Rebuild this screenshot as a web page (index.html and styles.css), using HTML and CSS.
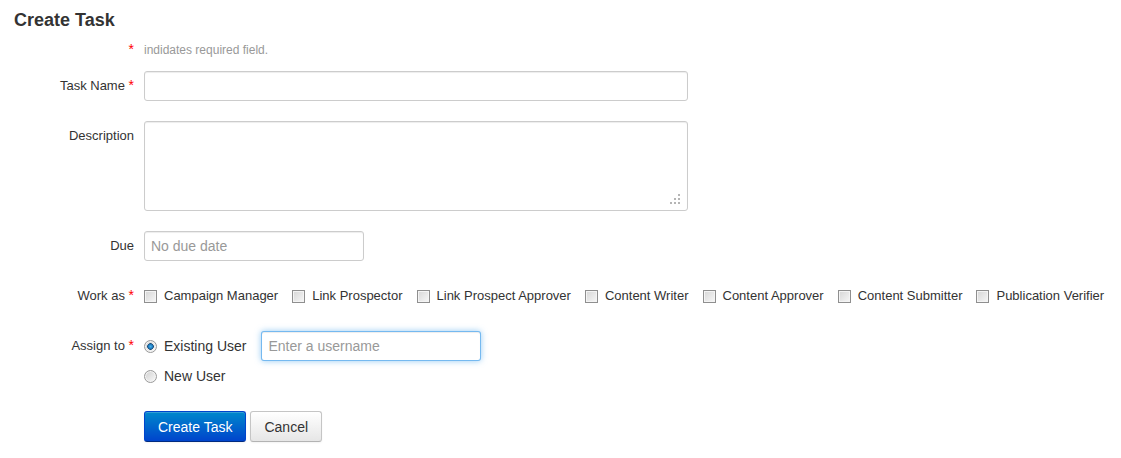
FILE: index.html
```html
<!DOCTYPE html>
<html>
    <head>
        <meta charset="utf-8">
        <title>Create Task</title>
        <link rel="stylesheet" href="styles.css">
    </head>
    <body>
        <div class="page">
            <h3>Create Task</h3>
            <div class="row note">
                <span class="label"><span class="req">*</span></span>
                <span class="hint">indidates required field.</span>
            </div>

            <div class="row">
                <label class="label" for="name">Task Name <span class="req">*</span></label>
                <input class="text wide" id="name" type="text">
            </div>

            <div class="row">
                <label class="label" for="desc">Description</label>
                <div class="area">
                    <textarea class="text wide" id="desc"></textarea>
                    <svg class="grip" width="11" height="11" viewBox="0 0 11 11">
                        <rect x="8" y="0" width="2" height="2" fill="#b5b5b5"/>
                        <rect x="4" y="4" width="2" height="2" fill="#b5b5b5"/>
                        <rect x="8" y="4" width="2" height="2" fill="#b5b5b5"/>
                        <rect x="0" y="8" width="2" height="2" fill="#b5b5b5"/>
                        <rect x="4" y="8" width="2" height="2" fill="#b5b5b5"/>
                        <rect x="8" y="8" width="2" height="2" fill="#b5b5b5"/>
                    </svg>
                </div>
            </div>

            <div class="row">
                <label class="label" for="due">Due</label>
                <input class="text short" id="due" type="text" placeholder="No due date">
            </div>

            <div class="row">
                <span class="label">Work as <span class="req">*</span></span>
                <div class="checks">
                    <label class="check"><input type="checkbox"> Campaign Manager</label>
                    <label class="check"><input type="checkbox"> Link Prospector</label>
                    <label class="check"><input type="checkbox"> Link Prospect Approver</label>
                    <label class="check"><input type="checkbox"> Content Writer</label>
                    <label class="check"><input type="checkbox"> Content Approver</label>
                    <label class="check"><input type="checkbox"> Content Submitter</label>
                    <label class="check"><input type="checkbox"> Publication Verifier</label>
                </div>
            </div>

            <div class="row">
                <span class="label">Assign to <span class="req">*</span></span>
                <div class="options">
                    <div class="option">
                        <label class="check radio"><input type="radio" name="assign" checked> Existing User</label>
                        <input class="text short focus" type="text" placeholder="Enter a username">
                    </div>
                    <div class="option">
                        <label class="check radio"><input type="radio" name="assign"> New User</label>
                    </div>
                </div>
            </div>

            <div class="row">
                <span class="label"></span>
                <div class="buttons">
                    <button class="btn primary">Create Task</button>
                    <button class="btn">Cancel</button>
                </div>
            </div>
        </div>
    </body>
</html>
```

FILE: styles.css
```css
*, ::after, ::before {
    box-sizing: border-box;
}
body {
    margin: 0;
    font-family: "Liberation Sans", Arial, sans-serif;
    font-size: 13px;
    color: #333;
    background: #fff;
}
.page {
    padding: 10px 14px;
}
h3 {
    margin: 0 0 10px 0;
    font-size: 18px;
    line-height: 20px;
    font-weight: bold;
}
.row {
    display: flex;
    align-items: flex-start;
    gap: 10px;
    margin-bottom: 20px;
}
.row.note {
    margin-bottom: 11px;
    height: 20px;
    line-height: 20px;
}
.label {
    flex: 0 0 120px;
    text-align: right;
    line-height: 30px;
    height: 30px;
}
.note .label {
    line-height: 20px;
    height: 20px;
}
.req {
    color: #f00;
    font-size: 14px;
    line-height: 1;
}
.hint {
    color: #999;
    font-size: 12px;
}
.text {
    height: 30px;
    padding: 0 6px;
    border: 1px solid #ccc;
    border-radius: 3px;
    box-shadow: inset 0 1px 1px rgba(0, 0, 0, 0.075);
    font-family: inherit;
    font-size: 14px;
    color: #555;
    outline: none;
}
.text::placeholder {
    color: #999;
}
.wide {
    width: 544px;
}
.short {
    width: 220px;
}
.area {
    position: relative;
    height: 90px;
}
textarea.text {
    display: block;
    height: 90px;
    padding: 4px 6px;
    resize: none;
}
.grip {
    position: absolute;
    right: 7px;
    bottom: 6px;
}
.focus {
    border-color: rgba(82, 168, 236, 0.8);
    box-shadow: inset 0 1px 1px rgba(0, 0, 0, 0.075), 0 0 6px rgba(82, 168, 236, 0.6);
}
.checks {
    display: flex;
    height: 30px;
    align-items: center;
}
.check {
    display: flex;
    align-items: center;
    margin-right: 14px;
    white-space: nowrap;
    line-height: 30px;
}
.check.radio {
    font-size: 14px;
    margin-right: 15px;
}
.check input {
    appearance: none;
    -webkit-appearance: none;
    width: 13px;
    height: 13px;
    margin: 0 7px 0 0;
    border: 1px solid #8f8f8f;
    background: linear-gradient(135deg, #d6d6d6, #f7f7f7);
    box-shadow: inset 0 0 0 1px #f4f4f4;
}
.check input[type="radio"] {
    border-radius: 50%;
    border-color: #9a9a9a;
    background: linear-gradient(135deg, #cfcfcf, #fafafa);
}
.check input[type="radio"]:checked {
    background: radial-gradient(circle at 50% 50%, #49b2ec 0, #1f7fc4 2px, #1d4f7a 3px, transparent 3.6px), linear-gradient(135deg, #cfcfcf, #fafafa);
}
.options {
    display: flex;
    flex-direction: column;
}
.option {
    display: flex;
    align-items: center;
    height: 30px;
}
.buttons {
    display: flex;
    gap: 4px;
}
.btn {
    height: 31px;
    padding: 0 13px;
    font-family: inherit;
    font-size: 14px;
    color: #333;
    border: 1px solid #c5c5c5;
    border-bottom-color: #b3b3b3;
    border-radius: 3px;
    background: linear-gradient(#ffffff, #e6e6e6);
    box-shadow: inset 0 1px 0 rgba(255, 255, 255, 0.2), 0 1px 2px rgba(0, 0, 0, 0.05);
}
.btn.primary {
    color: #fff;
    border-color: #0044cc #0044cc #002a80;
    background: linear-gradient(#0088cc, #0044cc);
}
```
